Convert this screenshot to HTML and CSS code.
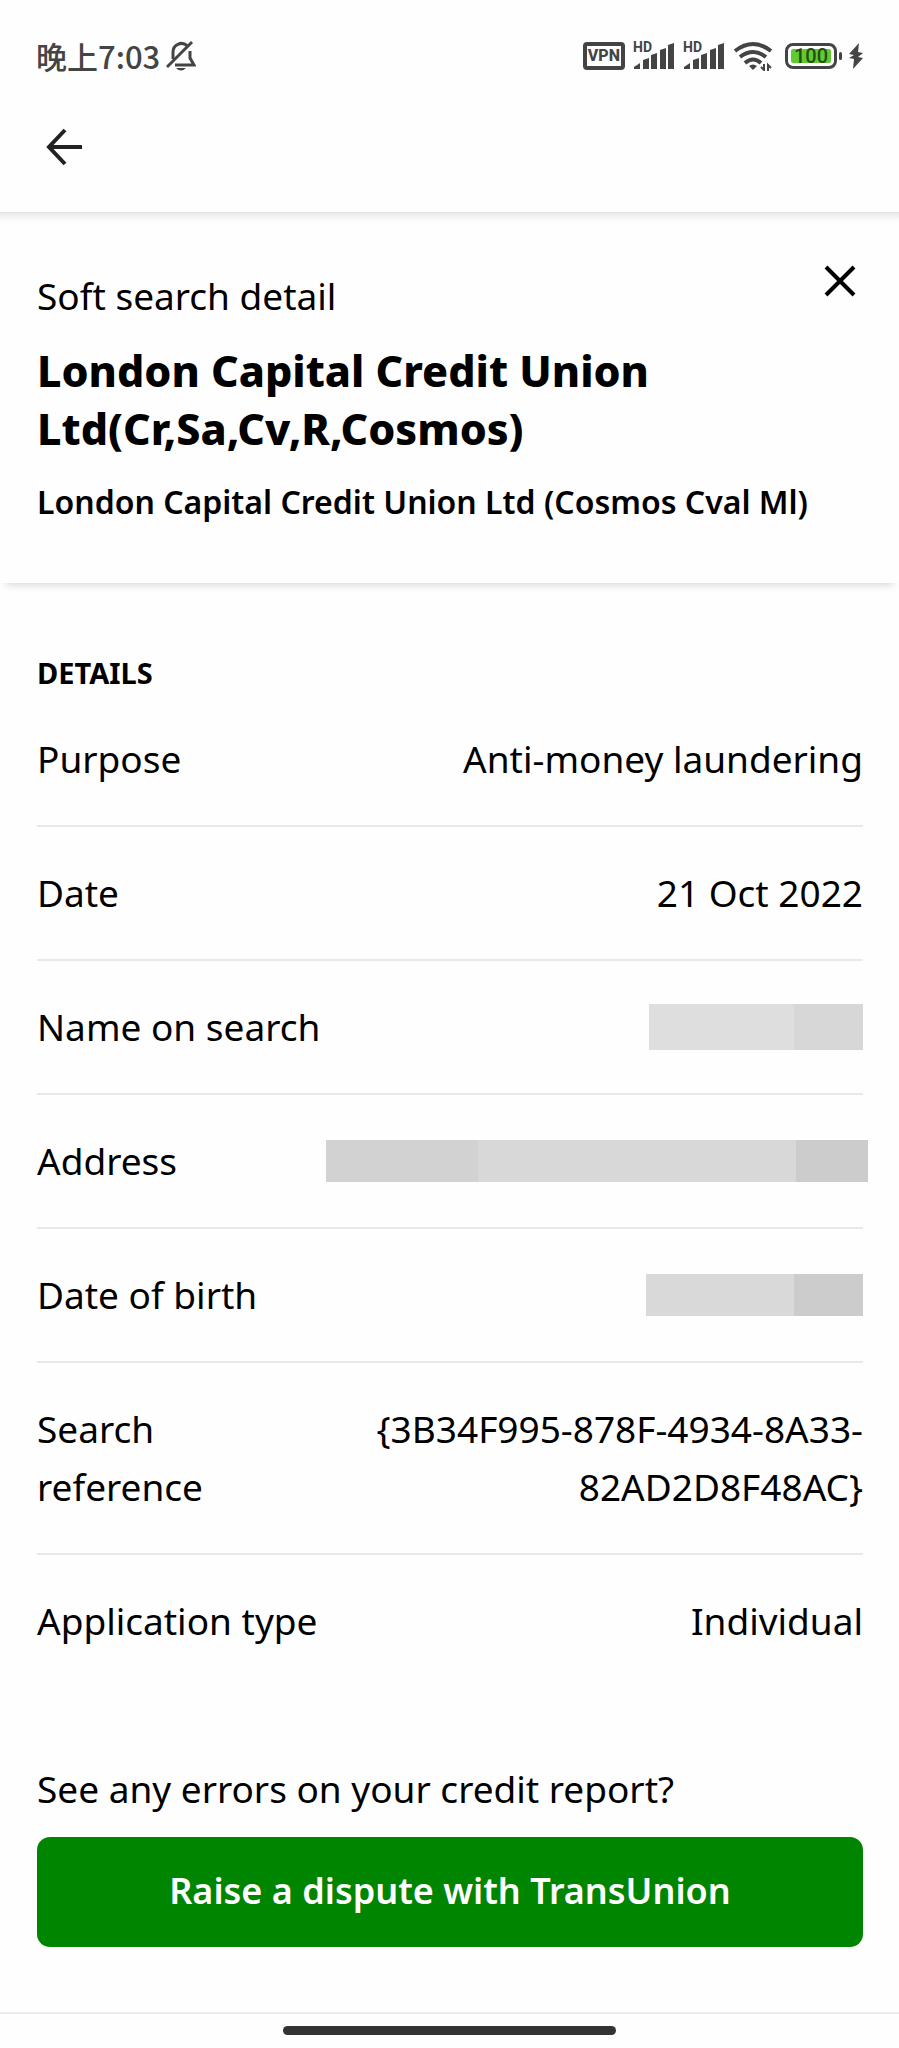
FILE: index.html
```html
<!DOCTYPE html>
<html lang="en">
<head>
    <meta charset="UTF-8">
    <meta name="viewport" content="width=device-width, initial-scale=1.0">
    <title>Soft search detail</title>
    <link rel="stylesheet" href="styles.css">
</head>
<body>
    <div class="status-bar">
        <div class="status-left">
            <span class="time" lang="zh">晚上7:03</span>
            <svg class="icon-mute" width="30" height="32" viewBox="0 0 30 32" fill="none" stroke="#444" stroke-width="3">
                <path d="M7 19V12a8.500 8.500 0 0 1 14-6.500M24 11V18l4 7H9"/>
                <path d="M1 27L26 2"/>
                <path d="M10 28h10q-5 5-10 0z" fill="#444" stroke="none"/>
            </svg>
        </div>
        <div class="status-right">
            <span class="vpn">VPN</span>
            <div class="signal">
                <span class="hd">HD</span>
                <svg width="42" height="28" viewBox="0 0 42 28" fill="#444">
                    <path d="M1 27v-2l6-4v6zM10 18l6-2v11h-6zM18 13l6-2v16h-6zM27 8l6-2v21h-6zM35 3l6-2v26h-6z"/>
                </svg>
            </div>
            <div class="signal">
                <span class="hd">HD</span>
                <svg width="42" height="28" viewBox="0 0 42 28" fill="#444">
                    <path d="M1 27v-2l6-4v6zM10 18l6-2v11h-6zM18 13l6-2v16h-6zM27 8l6-2v21h-6zM35 3l6-2v26h-6z"/>
                </svg>
            </div>
            <svg class="icon-wifi" width="40" height="30" viewBox="0 0 40 30" fill="none" stroke="#444" stroke-width="4">
                <path d="M2 10Q20-4 38 10M7 16Q20 6 33 16M12 22Q20 15 28 22"/>
                <path d="M16 25q4-3 8 0l-4 4z" fill="#444" stroke="none"/>
                <path d="M31 23v6l-3-3M35 30v-6l3 3" stroke-width="2"/>
            </svg>
            <div class="battery"><span class="battery-level">100</span></div>
            <svg class="icon-bolt" width="14" height="26" viewBox="0 0 14 26" fill="#444">
                <path d="M10 0L0 11l5 1-5 3 5 1-1 10L14 15l-5-1 5-4-5-1z"/>
            </svg>
        </div>
    </div>
    <header class="app-bar">
        <button type="button" class="icon-button" aria-label="Back">
            <svg width="38" height="38" viewBox="0 0 38 38" fill="none" stroke="#222" stroke-width="4">
                <path d="M20 2L4 19L20 36M4 19H37"/>
            </svg>
        </button>
    </header>
    <section class="summary">
        <div class="summary-text">
            <p class="kicker">Soft search detail</p>
            <h1>London Capital Credit Union Ltd(Cr,Sa,Cv,R,Cosmos)</h1>
            <h2>London Capital Credit Union Ltd (Cosmos Cval Ml)</h2>
        </div>
        <button type="button" class="icon-button close" aria-label="Close">
            <svg width="32" height="32" viewBox="0 0 32 32" fill="none" stroke="#000" stroke-width="4">
                <path d="M2 2L30 30M30 2L2 30"/>
            </svg>
        </button>
    </section>
    <main class="details">
        <h3>DETAILS</h3>
        <dl>
            <div class="row">
                <dt>Purpose</dt>
                <dd>Anti-money laundering</dd>
            </div>
            <div class="row">
                <dt>Date</dt>
                <dd>21 Oct 2022</dd>
            </div>
            <div class="row">
                <dt>Name on search</dt>
                <dd><div class="redacted redacted-name"></div></dd>
            </div>
            <div class="row">
                <dt>Address</dt>
                <dd><div class="redacted redacted-address"></div></dd>
            </div>
            <div class="row">
                <dt>Date of birth</dt>
                <dd><div class="redacted redacted-dob"></div></dd>
            </div>
            <div class="row">
                <dt>Search reference</dt>
                <dd>{3B34F995-878F-4934-8A33-82AD2D8F48AC}</dd>
            </div>
            <div class="row">
                <dt>Application type</dt>
                <dd>Individual</dd>
            </div>
        </dl>
        <p class="prompt">See any errors on your credit report?</p>
        <button type="button" class="dispute">Raise a dispute with TransUnion</button>
    </main>
    <footer class="gesture-bar">
        <div class="handle"></div>
    </footer>
</body>
</html>
```
FILE: styles.css
```css
* {
    box-sizing: border-box;
}
body {
    margin: 0;
    min-height: 100vh;
    display: flex;
    flex-direction: column;
    background-color: #fefefe;
    color: #000;
    font-family: "Noto Sans", "Noto Sans CJK SC", sans-serif;
    font-size: 37px;
    line-height: 58px;
}
h1, h2, h3, p, dl, dd {
    margin: 0;
}
svg {
    display: block;
    flex: none;
}
.status-bar {
    display: flex;
    justify-content: space-between;
    align-items: center;
    height: 112px;
    padding: 0 36px;
    color: #444;
}
.status-left, .status-right {
    display: flex;
    align-items: center;
}
.status-left {
    gap: 6px;
}
.status-right {
    gap: 8px;
}
.time {
    font-family: "Noto Sans CJK SC", sans-serif;
    font-size: 31px;
    font-weight: 500;
    line-height: 40px;
}
.vpn {
    padding: 0 1px;
    border: 4px solid #444;
    border-radius: 4px;
    font-family: Roboto, sans-serif;
    font-size: 16px;
    font-weight: 800;
    line-height: 20px;
}
.signal {
    position: relative;
}
.hd {
    position: absolute;
    top: 0;
    left: 0;
    font-family: Roboto, sans-serif;
    font-size: 14px;
    font-weight: 700;
    line-height: 10px;
}
.battery {
    position: relative;
    padding: 3px;
    border: 3px solid #444;
    border-radius: 8px;
}
.battery::after {
    content: "";
    position: absolute;
    top: 6px;
    right: -8px;
    width: 3px;
    height: 8px;
    border-radius: 2px;
    background-color: #444;
}
.battery-level {
    display: block;
    width: 40px;
    border-radius: 2px;
    background-color: #5fcb2f;
    color: #264d13;
    font-family: Roboto, sans-serif;
    font-size: 20px;
    font-weight: 500;
    line-height: 14px;
    text-align: center;
}
.icon-wifi {
    margin-right: 4px;
}
.icon-bolt {
    margin-left: 4px;
}
.app-bar {
    height: 100px;
    padding: 16px 45px;
}
.icon-button {
    display: block;
    padding: 0;
    border: none;
    background: none;
    cursor: pointer;
}
.summary {
    display: flex;
    justify-content: space-between;
    align-items: flex-start;
    padding: 54px 36px 52px 37px;
    border-top: 1px solid #e2e2e2;
    box-shadow: inset 0 10px 10px -8px rgba(0, 0, 0, 0.12), 0 8px 8px -6px rgba(0, 0, 0, 0.16);
}
.summary-text {
    flex: 1;
    min-width: 0;
}
.close {
    margin: -2px 7px 0 -40px;
}
h1 {
    margin-top: 17px;
    font-size: 43px;
    font-weight: 800;
    line-height: 58px;
}
h2 {
    margin-top: 15px;
    font-size: 32px;
    font-weight: 600;
    line-height: 58px;
}
.details {
    padding: 70px 36px 65px 37px;
}
h3 {
    font-size: 29px;
    font-weight: 700;
    line-height: 40px;
}
.row {
    display: flex;
    align-items: center;
    padding: 37px 0;
    border-bottom: 2px solid #e9e9e9;
}
.row:last-child {
    border-bottom: none;
}
dt {
    flex: 0 0 35%;
}
dd {
    flex: 1;
    text-align: right;
}
.redacted {
    height: 42px;
    margin-left: auto;
}
.redacted-name {
    width: 214px;
    height: 46px;
    background: linear-gradient(to left, #d7d7d7 69px, #dedede 69px);
}
.redacted-address {
    width: 542px;
    margin-right: -4px;
    background: linear-gradient(to left, #cccccc 72px, #d8d8d8 72px 390px, #d2d2d2 390px);
}
.redacted-dob {
    width: 217px;
    background: linear-gradient(to left, #cccccc 69px, #d9d9d9 69px);
}
.prompt {
    margin-top: 73px;
}
.dispute {
    width: 100%;
    height: 110px;
    margin-top: 19px;
    padding: 0 0 3px;
    border: none;
    border-radius: 13px;
    background-color: #008500;
    color: #fff;
    font-family: inherit;
    font-size: 36px;
    font-weight: 600;
    cursor: pointer;
}
.gesture-bar {
    margin-top: auto;
    height: 37px;
    padding-top: 12px;
    border-top: 2px solid #ececec;
}
.handle {
    width: 37%;
    height: 9px;
    margin: 0 auto;
    border-radius: 5px;
    background-color: #333;
}
```
